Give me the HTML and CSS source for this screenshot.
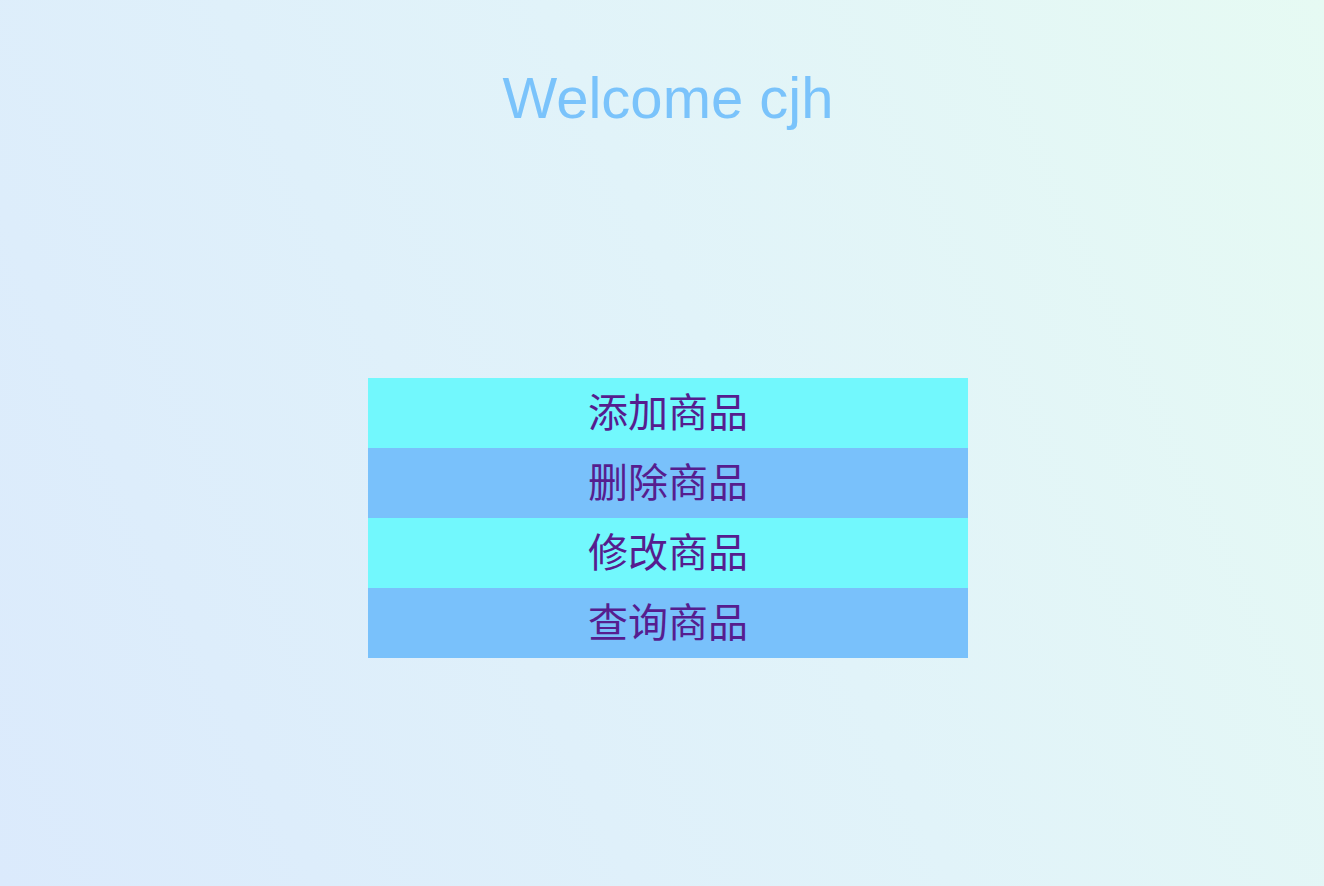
FILE: index.html
```html
<!DOCTYPE html>
<html lang="zh-CN">
<head>
<meta charset="utf-8">
<title>Welcome</title>
<link rel="stylesheet" href="styles.css">
</head>
<body>
<main class="page">
  <h1 class="welcome">Welcome cjh</h1>
  <nav class="menu">
    <a class="menu-item light" href="#">添加商品</a>
    <a class="menu-item dark" href="#">删除商品</a>
    <a class="menu-item light" href="#">修改商品</a>
    <a class="menu-item dark" href="#">查询商品</a>
  </nav>
</main>
</body>
</html>
```

FILE: styles.css
```css
html, body {
  margin: 0;
  padding: 0;
  height: 100%;
}

body {
  background: linear-gradient(65deg, #dbeafc 0%, #e1f3f9 55%, #e6faf3 100%);
  font-family: "Liberation Sans", "Noto Sans CJK SC", sans-serif;
}

.page {
  display: flex;
  flex-direction: column;
  align-items: center;
  padding-left: 12px;
  padding-top: 69px;
  box-sizing: border-box;
  min-height: 100%;
}

.welcome {
  margin: 0;
  font-size: 58px;
  line-height: 58px;
  font-weight: normal;
  color: #7ac3fb;
}

.menu {
  margin-top: 251px;
  width: 600px;
  display: flex;
  flex-direction: column;
}

.menu-item {
  height: 70px;
  box-sizing: border-box;
  padding-bottom: 6px;
  display: flex;
  align-items: center;
  justify-content: center;
  font-family: "Noto Sans CJK SC", sans-serif;
  font-size: 40px;
  line-height: 1;
  color: #561d8f;
  text-decoration: none;
}

.menu-item.light {
  background: #72f8fd;
}

.menu-item.dark {
  background: #79c1fb;
}
```
